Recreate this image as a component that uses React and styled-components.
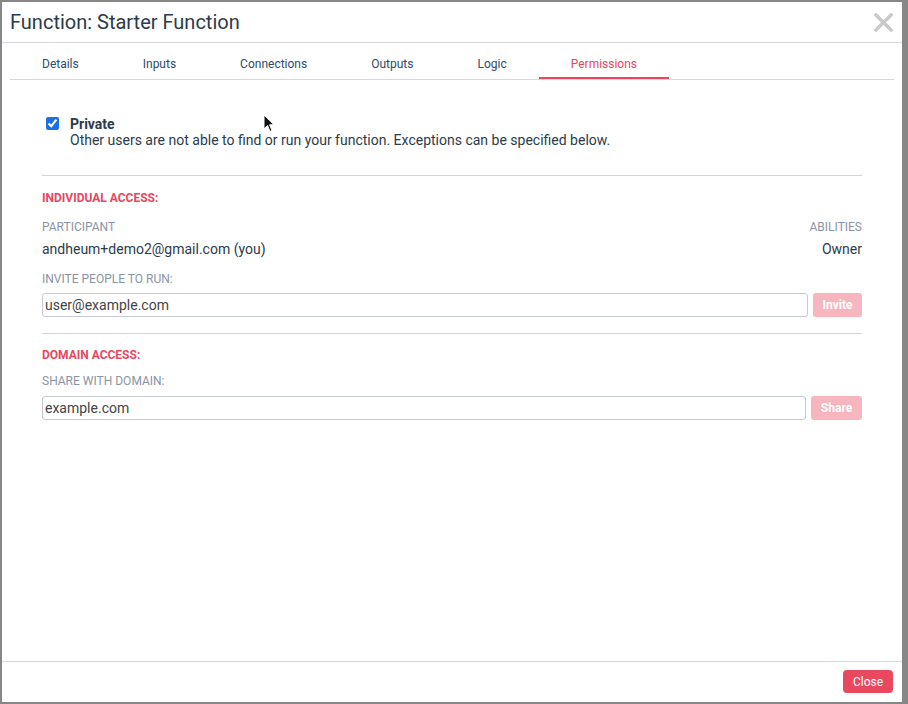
import React from "react"
import styled, { createGlobalStyle } from "styled-components"

const GlobalStyle = createGlobalStyle`
    html, body {
        margin: 0;
        padding: 0;
        background: #878787;
        font-family: Roboto, "Liberation Sans", sans-serif;
        overflow: hidden;
    }
`

const Modal = styled.div`
    position: relative;
    margin: 2px 0 0 2px;
    width: 900px;
    height: 700px;
    background: #fff;
    display: flex;
    flex-direction: column;
`

const Header = styled.div`
    height: 40px;
    padding: 0 9px 0 8px;
    display: flex;
    align-items: center;
    justify-content: space-between;
    border-bottom: 1px solid #d5d8e0;
`

const Title = styled.h1`
    margin: 0;
    font-size: 20px;
    font-weight: 400;
    color: #2b3b4c;
`

const CloseX = styled.button`
    border: 0;
    background: none;
    padding: 0;
    width: 19px;
    height: 19px;
    display: flex;
    cursor: pointer;
`

const TabBar = styled.div`
    margin: 0 8px;
    height: 36px;
    display: flex;
    border-bottom: 1px solid #d5d8e0;
`

const Tab = styled.div`
    padding: 0 32px 8px;
    display: flex;
    align-items: flex-end;
    font-size: 12px;
    color: ${p => p.$active ? "#e8475f" : "#2f4b68"};
    box-shadow: ${p => p.$active ? "inset 0 -2px 0 #e8475f" : "none"};
    cursor: pointer;
`

const Body = styled.div`
    flex: 1;
    padding: 36px 40px 0;
`

const PrivateRow = styled.label`
    display: flex;
    align-items: flex-start;
    gap: 8px;
`

const Check = styled.input`
    width: 13px;
    height: 13px;
    margin: 1px 3px 0 4px;
    accent-color: #1e6fe6;
`

const PrivateName = styled.div`
    font-size: 14px;
    font-weight: 700;
    color: #2b3b4c;
    line-height: 16px;
`

const PrivateNote = styled.div`
    font-size: 14px;
    color: #2b3b4c;
    line-height: 16px;
`

const Rule = styled.hr`
    border: 0;
    border-top: 1px solid #d3d5da;
    margin: ${p => p.$top}px 0 0;
`

const SectionTitle = styled.div`
    margin-top: ${p => p.$top}px;
    font-size: 12px;
    font-weight: 700;
    color: #e8475f;
    line-height: 14px;
`

const Label = styled.div`
    margin-top: ${p => p.$top}px;
    font-size: 12px;
    color: #8a94a3;
    line-height: 14px;
`

const SplitRow = styled.div`
    display: flex;
    justify-content: space-between;
`

const Value = styled.div`
    margin-top: 7px;
    font-size: 14px;
    color: #2b3b4c;
    line-height: 16px;
`

const InputRow = styled.div`
    margin-top: ${p => p.$top}px;
    display: flex;
    gap: 5px;
`

const TextInput = styled.input`
    flex: 1;
    height: 24px;
    box-sizing: border-box;
    border: 1px solid #c5cad5;
    border-radius: 3px;
    padding: 0 2px;
    font-family: Roboto, "Liberation Sans", sans-serif;
    font-size: 14px;
    color: #444;
    outline: none;
`

const FaintButton = styled.button`
    width: ${p => p.$w}px;
    height: 24px;
    border: 0;
    border-radius: 3px;
    background: #f7b5be;
    color: #fff;
    font-family: Roboto, "Liberation Sans", sans-serif;
    font-size: 12px;
    font-weight: 700;
    padding: 0;
`

const Footer = styled.div`
    height: 41px;
    border-top: 1px solid #d5d8e0;
    display: flex;
    justify-content: flex-end;
    align-items: flex-start;
    padding: 8px 9px 0;
    box-sizing: border-box;
`

const CloseButton = styled.button`
    width: 50px;
    height: 23px;
    border: 0;
    border-radius: 4px;
    background: #e9485e;
    color: #fff;
    font-family: Roboto, "Liberation Sans", sans-serif;
    font-size: 12px;
    padding: 0;
`

const Pointer = styled.svg`
    position: absolute;
    left: 261px;
    top: 112px;
`

const tabs = ["Details", "Inputs", "Connections", "Outputs", "Logic", "Permissions"]

export default function App() {
    return (
        <>
            <GlobalStyle />
            <Modal>
                <Header>
                    <Title>Function: Starter Function</Title>
                    <CloseX aria-label="close">
                        <svg width="19" height="19" viewBox="0 0 19 19">
                            <path d="M2 2 L17 17 M17 2 L2 17" stroke="#c9c9c9" strokeWidth="3.4" strokeLinecap="square" />
                        </svg>
                    </CloseX>
                </Header>
                <TabBar>
                    {tabs.map(t => (
                        <Tab key={t} $active={t === "Permissions"}>{t}</Tab>
                    ))}
                </TabBar>
                <Body>
                    <PrivateRow>
                        <Check type="checkbox" defaultChecked />
                        <div>
                            <PrivateName>Private</PrivateName>
                            <PrivateNote>Other users are not able to find or run your function. Exceptions can be specified below.</PrivateNote>
                        </div>
                    </PrivateRow>
                    <Rule $top={27} />
                    <SectionTitle $top={15}>INDIVIDUAL ACCESS:</SectionTitle>
                    <SplitRow>
                        <Label $top={15}>PARTICIPANT</Label>
                        <Label $top={15}>ABILITIES</Label>
                    </SplitRow>
                    <SplitRow>
                        <Value>andheum+demo2@gmail.com (you)</Value>
                        <Value>Owner</Value>
                    </SplitRow>
                    <Label $top={15}>INVITE PEOPLE TO RUN:</Label>
                    <InputRow $top={7}>
                        <TextInput defaultValue="user@example.com" />
                        <FaintButton $w={49}>Invite</FaintButton>
                    </InputRow>
                    <Rule $top={16} />
                    <SectionTitle $top={14}>DOMAIN ACCESS:</SectionTitle>
                    <Label $top={12}>SHARE WITH DOMAIN:</Label>
                    <InputRow $top={8}>
                        <TextInput defaultValue="example.com" />
                        <FaintButton $w={51}>Share</FaintButton>
                    </InputRow>
                </Body>
                <Footer>
                    <CloseButton>Close</CloseButton>
                </Footer>
                <Pointer width="12" height="19" viewBox="0 0 12 19">
                    <path d="M1 1 L1 15 L4.5 11.5 L7 17.5 L9 16.6 L6.6 10.8 L11 10.8 Z" fill="#111" stroke="#fff" strokeWidth="1" />
                </Pointer>
            </Modal>
        </>
    )
}
